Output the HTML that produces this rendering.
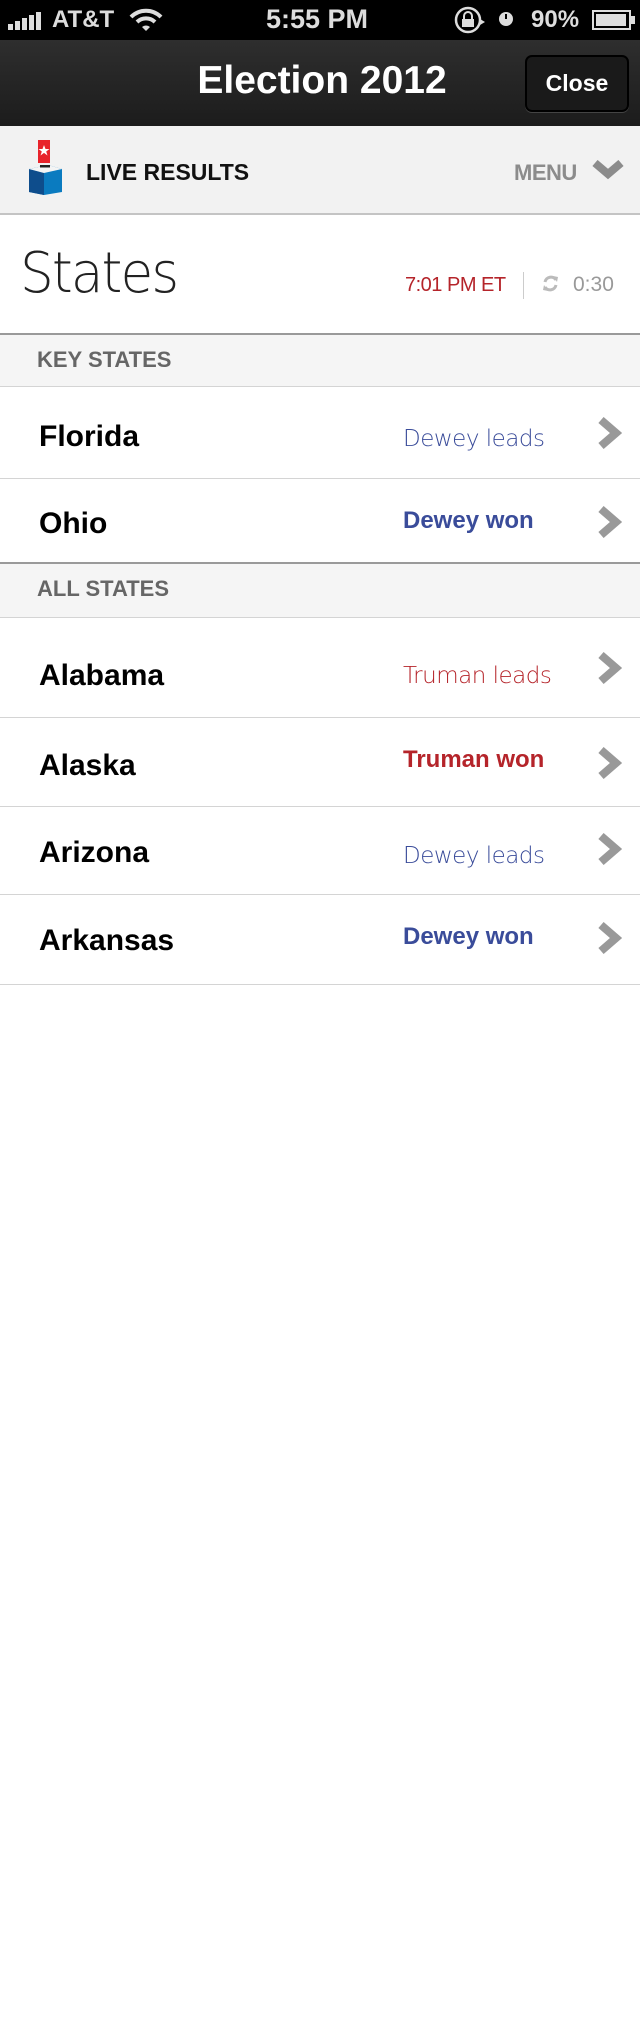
<!DOCTYPE html>
<html><head><meta charset="utf-8"><style>
*{margin:0;padding:0;box-sizing:border-box}
body{width:640px;height:2039px;background:#fff;font-family:"Liberation Sans",Arial,sans-serif;position:relative;overflow:hidden}
.abs{position:absolute}
.status{top:0;left:0;width:640px;height:40px;background:#000;color:#ddd;font-weight:bold}
.nav{top:40px;left:0;width:640px;height:86px;background:linear-gradient(#2e2e2e,#1c1c1c)}
.hdr{top:126px;left:0;width:640px;height:89px;background:#f2f2f2;border-bottom:2px solid #c4c4c4}
.sec{left:0;width:640px;background:#f5f5f5;border-top:2px solid #9a9a9a;border-bottom:1px solid #d4d4d4;color:#666;font-weight:bold;font-size:22px;padding-left:37px}
.row{left:0;width:640px;border-bottom:1px solid #d4d4d4}
.name{position:absolute;left:39px;font-size:30px;font-weight:bold;color:#000}
.st{position:absolute;left:403px;font-size:26px}
.lead{font-weight:300;font-family:"DejaVu Sans","Liberation Sans",sans-serif;font-size:23px;letter-spacing:-0.5px}
.won{font-weight:bold;font-size:24px}
.blue{color:#3a4c9a}.red{color:#b5242a}
.chev{position:absolute;left:596px}
</style></head><body>
<div class="abs status">
  <svg class="abs" style="left:8px;top:12px" width="38" height="18"><rect x="0" y="12" width="5" height="6" fill="#ddd"/><rect x="7" y="9" width="5" height="9" fill="#ddd"/><rect x="14" y="6" width="5" height="12" fill="#ddd"/><rect x="21" y="3" width="5" height="15" fill="#ddd"/><rect x="28" y="0" width="5" height="18" fill="#ddd"/></svg>
  <div class="abs" style="left:52px;top:6px;font-size:24px">AT&amp;T</div>
  <svg class="abs" style="left:129px;top:8px" width="34" height="24" viewBox="0 0 34 24"><path d="M2 9 A21 21 0 0 1 32 9" stroke="#ddd" stroke-width="4" fill="none"/><path d="M8 14 A13 13 0 0 1 26 14" stroke="#ddd" stroke-width="4" fill="none"/><path d="M13 19 L17 23 L21 19 A6 6 0 0 0 13 19Z" fill="#ddd"/></svg>
  <div class="abs" style="left:266px;top:4px;font-size:27px">5:55 PM</div>
  <svg class="abs" style="left:452px;top:5px" width="36" height="30"><circle cx="16" cy="15" r="12" stroke="#ddd" stroke-width="2.5" fill="none"/><rect x="10" y="14" width="12" height="8" fill="#ddd"/><path d="M12 14v-3a4 4 0 0 1 8 0v3" stroke="#ddd" stroke-width="2" fill="none"/><path d="M28 14l5 3-5 3z" fill="#ddd"/></svg>
  <svg class="abs" style="left:499px;top:11px" width="14" height="16"><circle cx="7" cy="8" r="7" fill="#ddd"/><path d="M7 8V3" stroke="#000" stroke-width="2"/></svg>
  <div class="abs" style="left:531px;top:6px;font-size:24px">90%</div>
  <svg class="abs" style="left:592px;top:10px" width="44" height="20"><rect x="1" y="1" width="37" height="18" stroke="#ddd" stroke-width="2" fill="none"/><rect x="4" y="4" width="30" height="12" fill="#ddd"/><rect x="39" y="6" width="4" height="8" fill="#ddd"/></svg>
</div>
<div class="abs nav">
  <div class="abs" style="left:0;width:640px;top:19px;text-align:center;color:#fff;font-weight:bold;font-size:39px;padding-left:4px">Election 2012</div>
  <div class="abs" style="left:525px;top:15px;width:104px;height:57px;background:#1a1a1a;border:2px solid #000;border-radius:7px;box-shadow:0 1px 0 #444;color:#fff;font-weight:bold;font-size:23px;text-align:center;line-height:52px">Close</div>
</div>
<div class="abs hdr">
  <svg class="abs" style="left:28px;top:14px" width="36" height="56"><rect x="10" y="0" width="12" height="23" fill="#e8232b"/><path d="M16 5l1.5 4h4l-3.3 2.5 1.3 4-3.5-2.6-3.5 2.6 1.3-4L10.5 9h4z" fill="#fff"/><path d="M1 29 L20 25 L34 29 L34 52 L16 55 L1 52Z" fill="#0a7bc0"/><path d="M1 29 L16 33 L16 55 L1 52Z" fill="#0e4d8c"/><path d="M1 29 L20 25 L34 29 L16 33Z" fill="#f4f4f4"/><rect x="12" y="25" width="10" height="2.5" fill="#222"/></svg>
  <div class="abs" style="left:86px;top:33px;font-size:23px;font-weight:bold;color:#111;letter-spacing:0px">LIVE RESULTS</div>
  <div class="abs" style="left:514px;top:34px;font-size:22px;font-weight:bold;color:#8c8c8c;letter-spacing:-0.5px">MENU</div>
  <svg class="abs" style="left:592px;top:34px" width="32" height="22"><path d="M3 3 L16 14 L29 3" stroke="#8c8c8c" stroke-width="8" fill="none"/></svg>
</div>
<div class="abs" style="left:20px;top:241px;font-size:56px;color:#222;font-family:'DejaVu Sans','Liberation Sans',sans-serif;font-weight:300;letter-spacing:-2px;transform:scaleX(0.95);transform-origin:left">States</div>
<div class="abs red" style="left:405px;top:274px;font-size:20px;letter-spacing:-0.5px">7:01 PM ET</div>
<div class="abs" style="left:523px;top:272px;width:1px;height:27px;background:#ccc"></div>
<svg class="abs" style="left:542px;top:275px" width="17" height="17"><path d="M3 7 A6 6 0 0 1 14 5" stroke="#bbb" stroke-width="3" fill="none"/><path d="M14 10 A6 6 0 0 1 3 12" stroke="#bbb" stroke-width="3" fill="none"/><path d="M11 1l5 1-1 5z" fill="#bbb"/><path d="M6 16l-5-1 1-5z" fill="#bbb"/></svg>
<div class="abs" style="left:573px;top:273px;font-size:21px;color:#999">0:30</div>

<div class="abs sec" style="top:333px;height:54px;line-height:50px">KEY STATES</div>
<div class="abs row" style="top:387px;height:92px"><div class="name" style="top:33px">Florida</div><div class="st lead blue" style="top:39px">Dewey leads</div><svg class="chev" style="top:30px" width="26" height="32"><path d="M5 3 L20 16 L5 29" stroke="#999" stroke-width="8" fill="none"/></svg></div>
<div class="abs row" style="top:479px;height:84px;border-bottom:none"><div class="name" style="top:28px">Ohio</div><div class="st won blue" style="top:28px">Dewey won</div><svg class="chev" style="top:27px" width="26" height="32"><path d="M5 3 L20 16 L5 29" stroke="#999" stroke-width="8" fill="none"/></svg></div>
<div class="abs sec" style="top:562px;height:56px;line-height:50px">ALL STATES</div>
<div class="abs row" style="top:618px;height:100px"><div class="name" style="top:41px">Alabama</div><div class="st lead red" style="top:45px">Truman leads</div><svg class="chev" style="top:34px" width="26" height="32"><path d="M5 3 L20 16 L5 29" stroke="#999" stroke-width="8" fill="none"/></svg></div>
<div class="abs row" style="top:718px;height:89px"><div class="name" style="top:31px">Alaska</div><div class="st won red" style="top:28px">Truman won</div><svg class="chev" style="top:29px" width="26" height="32"><path d="M5 3 L20 16 L5 29" stroke="#999" stroke-width="8" fill="none"/></svg></div>
<div class="abs row" style="top:807px;height:88px"><div class="name" style="top:29px">Arizona</div><div class="st lead blue" style="top:36px">Dewey leads</div><svg class="chev" style="top:26px" width="26" height="32"><path d="M5 3 L20 16 L5 29" stroke="#999" stroke-width="8" fill="none"/></svg></div>
<div class="abs row" style="top:895px;height:90px"><div class="name" style="top:29px">Arkansas</div><div class="st won blue" style="top:28px">Dewey won</div><svg class="chev" style="top:27px" width="26" height="32"><path d="M5 3 L20 16 L5 29" stroke="#999" stroke-width="8" fill="none"/></svg></div>
</body></html>
